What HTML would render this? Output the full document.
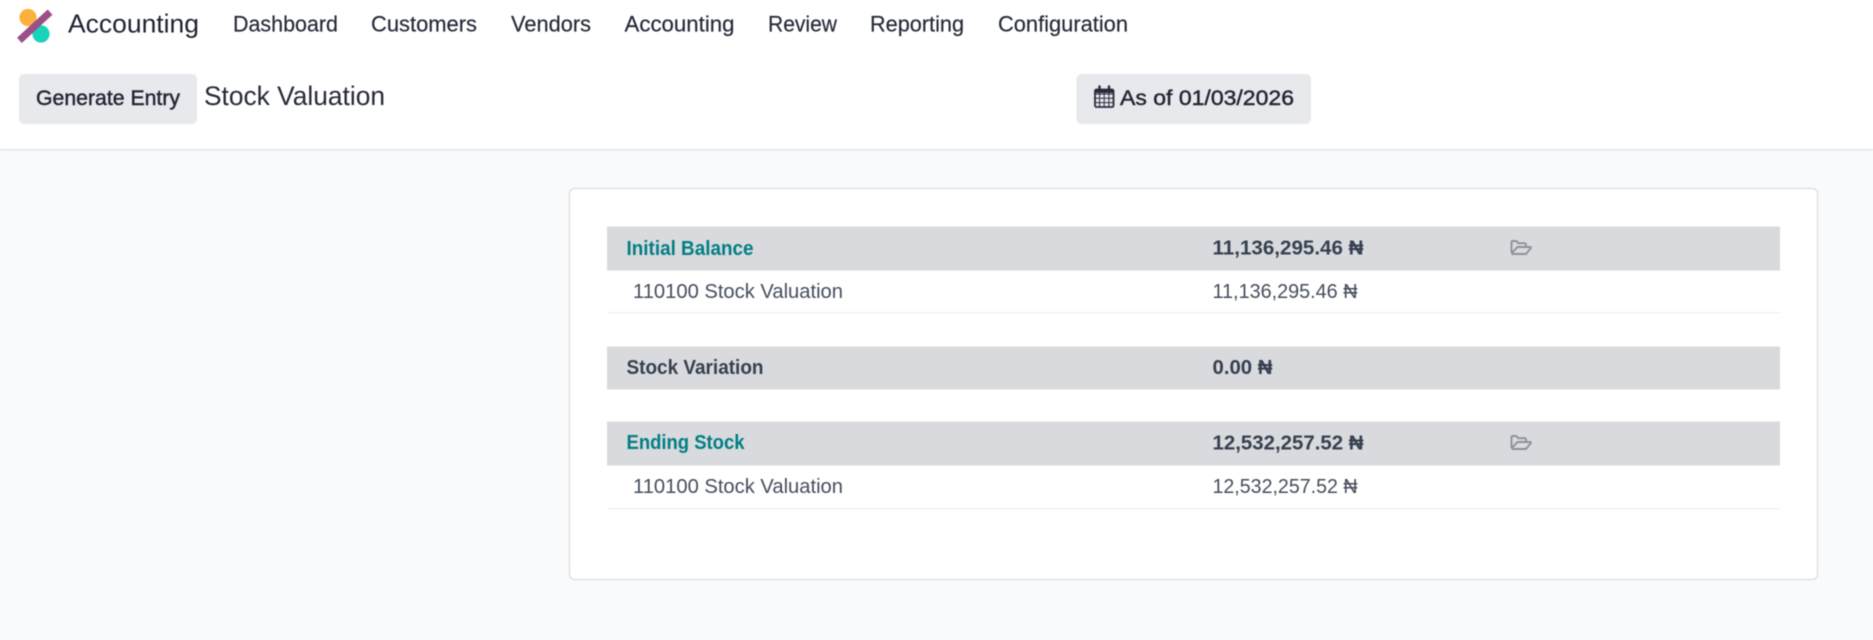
<!DOCTYPE html>
<html lang="en">
<head>
<meta charset="utf-8">
<title>Stock Valuation</title>
<style>
html,body{margin:0;padding:0;width:1873px;height:640px;overflow:hidden;background:#fff}
svg{display:block;filter:blur(0.5px)}
text{font-family:"Liberation Sans",Arial,sans-serif}
.nav{font-size:22px;fill:#222836;stroke:#222836;stroke-width:.15px}
.md{font-size:21.5px;fill:#1f2532;stroke:#1f2532;stroke-width:.45px}
.b{font-size:20px;font-weight:bold;fill:#364050}
.r{font-size:20px;fill:#454d5d}
.t{font-size:20px;font-weight:bold;fill:#017e84}
</style>
</head>
<body>
<svg width="1873" height="640" viewBox="0 0 1873 640" xmlns="http://www.w3.org/2000/svg">
  <rect x="0" y="0" width="1873" height="640" fill="#f9fafb"/>
  <rect x="0" y="0" width="1873" height="149" fill="#ffffff"/>
  <rect x="0" y="149" width="1873" height="1.5" fill="#e2e4e7"/>

  <!-- logo -->
  <circle cx="28" cy="17.5" r="8.6" fill="#fbb13c"/>
  <circle cx="41" cy="34" r="8.6" fill="#1ad3bb"/>
  <path d="M47.5 14.5 L22 38" stroke="#9b4f86" stroke-width="7" stroke-linecap="square" fill="none"/>

  <!-- nav -->
  <text x="68" y="32.5" font-size="26" fill="#1c2230" textLength="131" lengthAdjust="spacingAndGlyphs">Accounting</text>
  <text class="nav" x="233" y="31.5" textLength="105" lengthAdjust="spacingAndGlyphs">Dashboard</text>
  <text class="nav" x="371" y="31.5" textLength="106" lengthAdjust="spacingAndGlyphs">Customers</text>
  <text class="nav" x="511" y="31.5" textLength="80" lengthAdjust="spacingAndGlyphs">Vendors</text>
  <text class="nav" x="624.5" y="31.5" textLength="110" lengthAdjust="spacingAndGlyphs">Accounting</text>
  <text class="nav" x="768" y="31.5" textLength="69" lengthAdjust="spacingAndGlyphs">Review</text>
  <text class="nav" x="870" y="31.5" textLength="94" lengthAdjust="spacingAndGlyphs">Reporting</text>
  <text class="nav" x="998" y="31.5" textLength="130" lengthAdjust="spacingAndGlyphs">Configuration</text>

  <!-- control bar -->
  <rect x="19" y="74" width="178" height="50" rx="5" fill="#e7e9ed"/>
  <text class="md" x="36" y="105" textLength="144" lengthAdjust="spacingAndGlyphs">Generate Entry</text>
  <text x="204" y="105" font-size="26.5" fill="#242a38" textLength="181" lengthAdjust="spacingAndGlyphs">Stock Valuation</text>

  <rect x="1076.5" y="74" width="234.5" height="50" rx="5" fill="#e7e9ed"/>
  <g fill="none" stroke="#262c3a">
    <rect x="1095" y="89.5" width="18.5" height="17.5" rx="1.5" stroke-width="1.8"/>
    <rect x="1095" y="89.5" width="18.5" height="3.5" fill="#262c3a" stroke="none"/>
    <path d="M1095 94h18.5M1095 98.3h18.5M1095 102.6h18.5M1099.6 93v14M1104.2 93v14M1108.9 93v14" stroke-width="1"/>
    <path d="M1099.5 86.5v5M1109 86.5v5" stroke-width="2.4" stroke-linecap="round"/>
  </g>
  <text class="md" x="1120" y="105" textLength="174" lengthAdjust="spacingAndGlyphs">As of 01/03/2026</text>

  <!-- card -->
  <rect x="569.5" y="188.5" width="1248" height="391" rx="5" fill="#ffffff" stroke="#dcdee1" stroke-width="1.3"/>

  <!-- rows -->
  <rect x="607" y="226.5" width="1173" height="44" fill="#d8dadd"/>
  <text class="t" x="626.5" y="255" textLength="127" lengthAdjust="spacingAndGlyphs">Initial Balance</text>
  <text class="b" x="1212.5" y="254.5" textLength="151" lengthAdjust="spacingAndGlyphs">11,136,295.46 ₦</text>
  <g fill="none" stroke="#8f9198" stroke-width="1.9" stroke-linejoin="round" stroke-linecap="round">
    <path d="M1511.5 252 V242.5 Q1511.5 241 1513 241 H1516.3 L1518.3 243.2 H1524.5 Q1526 243.2 1526 244.8 V246"/>
    <path d="M1512.5 254 H1526 L1530.8 248.2 Q1531.2 247 1530 247 H1517.5 L1512 253"/>
  </g>

  <text class="r" x="633" y="298" textLength="210" lengthAdjust="spacingAndGlyphs">110100 Stock Valuation</text>
  <text class="r" x="1212.5" y="298" textLength="145" lengthAdjust="spacingAndGlyphs">11,136,295.46 ₦</text>
  <rect x="607" y="312" width="1173" height="1.3" fill="#eff0f1"/>

  <rect x="607" y="346.5" width="1173" height="43" fill="#d8dadd"/>
  <text x="626.5" y="374" font-size="20" font-weight="bold" fill="#364050" textLength="137" lengthAdjust="spacingAndGlyphs">Stock Variation</text>
  <text class="b" x="1212.5" y="374" textLength="60" lengthAdjust="spacingAndGlyphs">0.00 ₦</text>

  <rect x="607" y="421.5" width="1173" height="44" fill="#d8dadd"/>
  <text class="t" x="626.5" y="449" textLength="118" lengthAdjust="spacingAndGlyphs">Ending Stock</text>
  <text class="b" x="1212.5" y="449.5" textLength="151" lengthAdjust="spacingAndGlyphs">12,532,257.52 ₦</text>
  <g fill="none" stroke="#8f9198" stroke-width="1.9" stroke-linejoin="round" stroke-linecap="round" transform="translate(0,195)">
    <path d="M1511.5 252 V242.5 Q1511.5 241 1513 241 H1516.3 L1518.3 243.2 H1524.5 Q1526 243.2 1526 244.8 V246"/>
    <path d="M1512.5 254 H1526 L1530.8 248.2 Q1531.2 247 1530 247 H1517.5 L1512 253"/>
  </g>

  <text class="r" x="633" y="493" textLength="210" lengthAdjust="spacingAndGlyphs">110100 Stock Valuation</text>
  <text class="r" x="1212.5" y="493" textLength="145" lengthAdjust="spacingAndGlyphs">12,532,257.52 ₦</text>
  <rect x="607" y="508" width="1173" height="1.3" fill="#eff0f1"/>
</svg>
</body>
</html>
